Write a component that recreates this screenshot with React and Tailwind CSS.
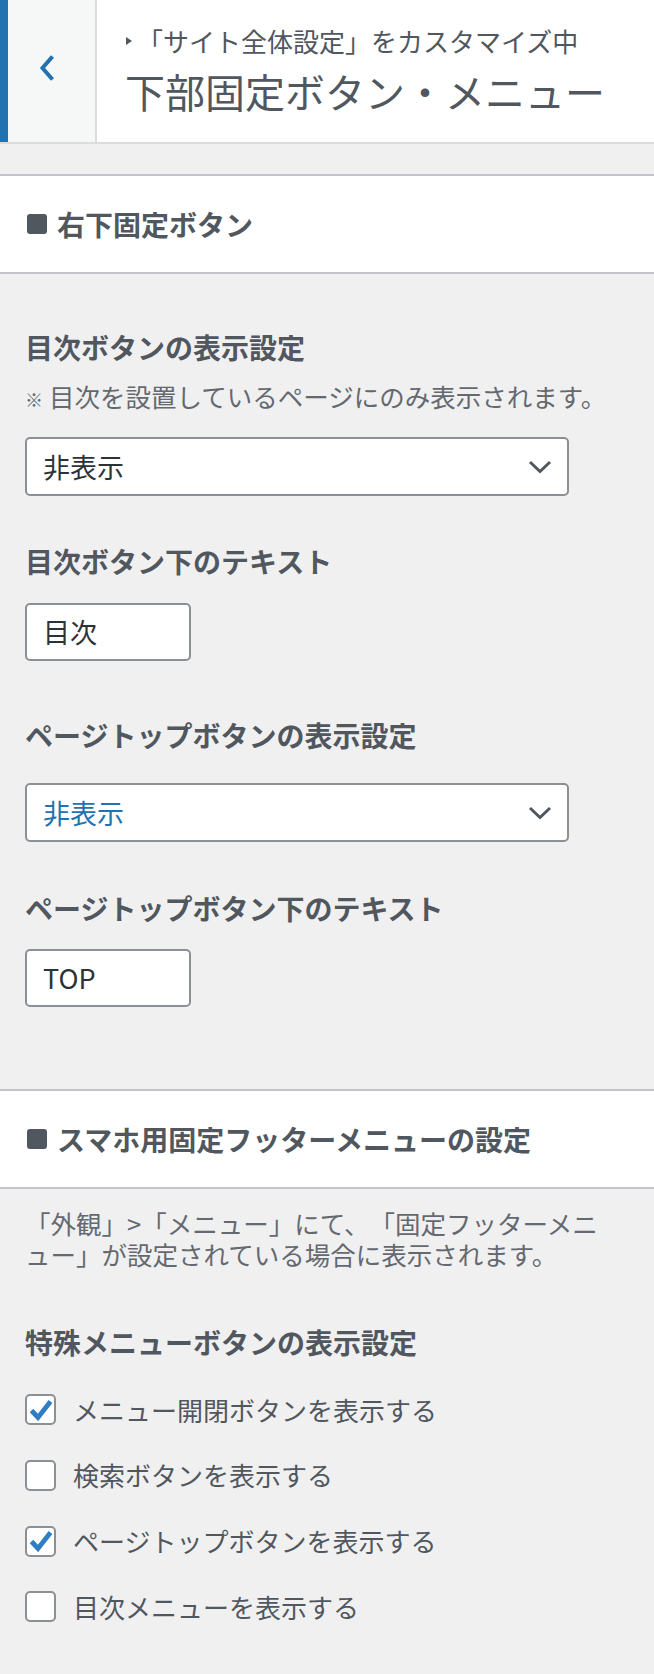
import React from "react";

const FONT = "font-['Noto_Sans_CJK_JP','Noto_Sans_CJK_SC',sans-serif] [text-spacing-trim:space-all]";

function SectionHeader({ title }) {
  return (
    <div className="flex h-[100px] items-center border-y-2 border-[#c3c4c7] bg-white pl-[27px]">
      <span className="mr-[10px] h-[20px] w-[20px] rounded-[3px] bg-[#50575e]" />
      <span className="text-[28px] font-bold leading-[38px] text-[#50575e]">{title}</span>
    </div>
  );
}

function Label({ children, className = "" }) {
  return (
    <div className={`text-[28px] font-bold leading-[38px] text-[#50575e] ${className}`}>
      {children}
    </div>
  );
}

function SelectBox({ value, blue, className = "" }) {
  return (
    <div
      className={`flex h-[59px] w-[544px] items-center justify-between rounded-[5px] border-2 border-[#8c8f94] bg-white pl-[16px] pr-[15px] ${className}`}
    >
      <span className={`text-[27px] leading-[34px] ${blue ? "text-[#2271b1]" : "text-[#2c3338]"}`}>
        {value}
      </span>
      <svg width="24" height="14" viewBox="0 0 24 14" fill="none">
        <path d="M2 2 L12 11.5 L22 2" stroke="#50575e" strokeWidth="3" />
      </svg>
    </div>
  );
}

function TextBox({ value, className = "" }) {
  return (
    <div
      className={`flex h-[58px] w-[166px] items-center rounded-[5px] border-2 border-[#8c8f94] bg-white pl-[16px] ${className}`}
    >
      <span className="text-[27px] leading-[34px] text-[#2c3338]">{value}</span>
    </div>
  );
}

function Check({ checked, label }) {
  return (
    <div className="flex h-[31px] items-center">
      <div className="flex h-[31px] w-[31px] shrink-0 items-center justify-center rounded-[5px] border-2 border-[#8c8f94] bg-white">
        {checked && (
          <svg width="24" height="22" viewBox="0 0 24 22" fill="none">
            <path
              d="M2.5 11.5 L9 18.5 L21.5 2.5"
              stroke="#2f7dc3"
              strokeWidth="4.8"
              strokeLinejoin="miter"
            />
          </svg>
        )}
      </div>
      <span className="ml-[17px] text-[26px] leading-[34px] text-[#50575e]">{label}</span>
    </div>
  );
}

export default function App() {
  return (
    <div className={`min-h-[1674px] w-[654px] bg-[#f0f0f1] ${FONT}`}>
      {/* header */}
      <header className="flex h-[144px] border-b-2 border-[#dcdcde] bg-white">
        <button className="flex w-[97px] shrink-0 items-center justify-center border-l-8 border-r-2 border-l-[#2271b1] border-r-[#dcdcde] bg-[#f6f7f7] pb-[6px] pr-[10px]">
          <svg width="18" height="28" viewBox="0 0 18 28" fill="none">
            <path d="M14.5 2.5 L4.5 14 L14.5 25.5" stroke="#2271b1" strokeWidth="4" />
          </svg>
        </button>
        <div className="flex flex-col pl-[28px] pt-[26px] text-[#50575e]">
          <div className="flex items-center text-[26px] leading-[30px]">
            <svg width="8" height="10" viewBox="0 0 8 10" className="mr-[4px]">
              <path d="M1 1 L7 5 L1 9 Z" fill="#50575e" />
            </svg>
            <span>「サイト全体設定」をカスタマイズ中</span>
          </div>
          <div className="mt-[12px] text-[40px] leading-[46px]">下部固定ボタン・メニュー</div>
        </div>
      </header>

      <div className="h-[30px]" />

      <SectionHeader title="右下固定ボタン" />

      <div className="px-[25px] pb-[82px] pt-[54px]">
        <Label>目次ボタンの表示設定</Label>
        <div className="mt-[12px] text-[25.5px] leading-[36px] text-[#646970]">
          <span className="mr-[6px] text-[18px]">※</span>
          目次を設置しているページにのみ表示されます。
        </div>
        <SelectBox value="非表示" className="mt-[20px]" />

        <Label className="mt-[46px]">目次ボタン下のテキスト</Label>
        <TextBox value="目次" className="mt-[23px]" />

        <Label className="mt-[55px]">ページトップボタンの表示設定</Label>
        <SelectBox value="非表示" blue className="mt-[29px]" />

        <Label className="mt-[47px]">ページトップボタン下のテキスト</Label>
        <TextBox value="TOP" className="mt-[22px]" />
      </div>

      <SectionHeader title="スマホ用固定フッターメニューの設定" />

      <div className="px-[25px] pb-[50px] pt-[18px]">
        <div className="text-[25.5px] leading-[31px] text-[#646970]">
          「外観」&gt;「メニュー」にて、「固定フッターメニ
          <br />
          ュー」が設定されている場合に表示されます。
        </div>

        <Label className="mt-[54px]">特殊メニューボタンの表示設定</Label>

        <div className="mt-[33px] flex flex-col gap-[34.8px]">
          <Check checked label="メニュー開閉ボタンを表示する" />
          <Check label="検索ボタンを表示する" />
          <Check checked label="ページトップボタンを表示する" />
          <Check label="目次メニューを表示する" />
        </div>
      </div>
    </div>
  );
}
